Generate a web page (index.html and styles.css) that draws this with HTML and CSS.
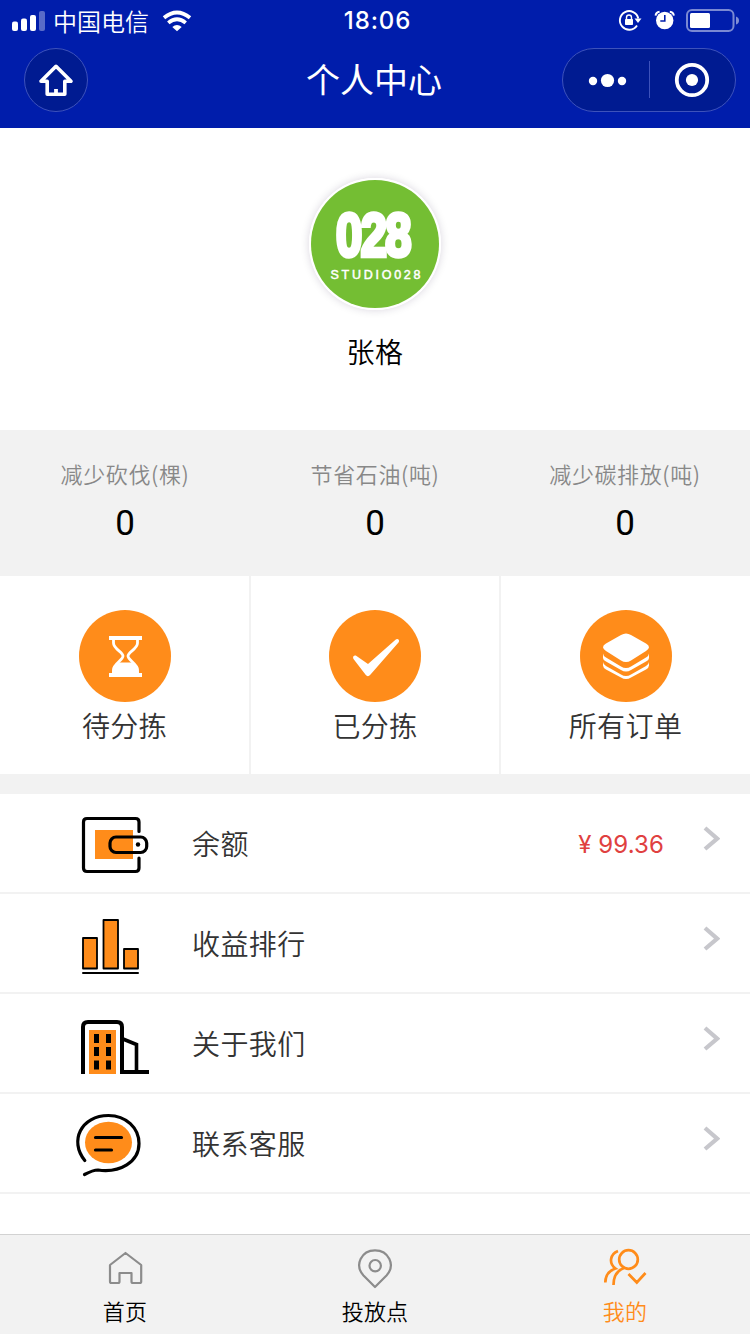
FILE: index.html
```html
<!DOCTYPE html>
<html lang="zh-CN">
<head>
<meta charset="utf-8">
<title>个人中心</title>
<link rel="stylesheet" href="styles.css">
</head>
<body>
<div class="app">
  <header class="header">
    <div class="status">
      <div class="status-left">
        <svg class="signal" viewBox="12 0 33 40"><g fill="#fff"><rect x="12" y="20.500" width="6" height="9.500" rx="2"/><rect x="21" y="17.500" width="6" height="12.500" rx="2"/><rect x="30" y="14" width="6" height="16" rx="2"/><rect x="39" y="10" width="6" height="20" rx="2" opacity=".35"/></g></svg>
        <span class="carrier">中国电信</span>
        <svg class="wifi" viewBox="162 0 30 40"><g fill="none" stroke="#fff" stroke-width="3.800"><path d="M164 16.800Q177 6.200 190 16.800"/><path d="M168.300 21.900Q177 14.700 185.700 21.900"/></g><path d="M172.300 26Q177 22.200 181.700 26L177 30.300Z" fill="#fff"/></svg>
      </div>
      <div class="time">18:06</div>
      <svg class="status-right" viewBox="614 0 124 40">
        <path d="M637 25.500A9.300 9.300 0 1 1 638.300 18.500" fill="none" stroke="#fff" stroke-width="1.900"/>
        <path d="M634.500 18.500h7l-3.500 4.500z" fill="#fff"/>
        <rect x="625" y="19" width="8" height="6" rx=".8" fill="#fff"/><path d="M626.500 19.500v-2a2.500 2.500 0 0 1 5 0v2" fill="none" stroke="#fff" stroke-width="1.400"/>
        <circle cx="664.700" cy="20.500" r="8.700" fill="#fff"/><path d="M664.800 15v6h-4.500" fill="none" stroke="#001dab" stroke-width="1.600"/><path d="M655.600 15.600q.2-3.500 4-3.900M673.800 15.600q-.2-3.500-4-3.900" fill="none" stroke="#fff" stroke-width="2"/>
        <rect x="687" y="10" width="46.500" height="21" rx="5" fill="none" stroke="#fff" stroke-opacity=".48" stroke-width="2"/><rect x="690" y="13" width="20" height="15" rx="1.500" fill="#fff"/><path d="M736 16.500q3 1 3 4t-3 4z" fill="#fff" opacity=".5"/>
      </svg>
    </div>
    <div class="nav">
      <svg class="home" viewBox="24 48 64 64"><circle cx="56" cy="80" r="31.500" fill="#001b91" stroke="#3d52bb"/><path d="M47.200 81.200H41L56 66.300 71 81.200H64.800V94.300H47.200Z" fill="none" stroke="#fff" stroke-width="3.600" stroke-linejoin="round"/><path d="M56 89v5" stroke="#fff" stroke-width="3.800"/></svg>
      <h1 class="title">个人中心</h1>
      <svg class="capsule" viewBox="562 48 174 64"><rect x="562.500" y="48.500" width="173" height="63" rx="31.500" fill="#001b91" stroke="#3d52bb"/><path d="M649.500 61v37" stroke="#3d52bb"/><g fill="#fff"><circle cx="593" cy="81" r="4.200"/><circle cx="607.500" cy="80.500" r="6.600"/><circle cx="622" cy="81" r="4.200"/><circle cx="692" cy="80" r="6.100"/></g><circle cx="692" cy="80" r="15.200" fill="none" stroke="#fff" stroke-width="3.800"/></svg>
    </div>
  </header>

  <section class="profile">
    <div class="avatar">
      <svg viewBox="311 180 128 128"><circle cx="375" cy="244" r="64" fill="#74be33"/>
        <text class="logo-number" transform="translate(373 255.500) scale(.76 1)" text-anchor="middle">028</text>
        <text class="logo-name" x="330.500" y="278.800" textLength="90">STUDIO028</text></svg>
    </div>
    <div class="name">张格</div>
  </section>

  <section class="stats">
    <div class="stat"><span class="stat-label">减少砍伐(棵)</span><span class="stat-value">0</span></div>
    <div class="stat"><span class="stat-label">节省石油(吨)</span><span class="stat-value">0</span></div>
    <div class="stat"><span class="stat-label">减少碳排放(吨)</span><span class="stat-value">0</span></div>
  </section>

  <section class="orders">
    <div class="order">
      <svg class="order-icon" viewBox="78 610 92 92"><circle cx="124" cy="656" r="46" fill="#ff8c1a"/><g fill="#fff"><path d="M108 636h33v4h-33zM108 673h33v4h-33z"/><path d="M111 674c0-6 3-8 7.500-11.500h12.500C135 666 138 668 138 674z"/></g><path d="M112.500 639v4c0 6 9.500 9 9.500 13s-9.500 8-9.500 13.500V674M136.500 639v4c0 6-9.500 9-9.500 13s9.500 8 9.500 13.500V674" fill="none" stroke="#fff" stroke-width="2.800"/></svg>
      <span>待分拣</span>
    </div>
    <div class="order">
      <svg class="order-icon" viewBox="329 610 92 92"><circle cx="375" cy="656" r="46" fill="#ff8c1a"/><path d="M353.500 659c-1.400-2.200.8-4.500 3-3l11.500 8 27.500-24.300c2-1.700 4.600.2 3.200 2.600L370.300 674.800c-1.500 1.800-3.300 1.700-4.500.2z" fill="#fff"/></svg>
      <span>已分拣</span>
    </div>
    <div class="order">
      <svg class="order-icon" viewBox="580 610 92 92"><circle cx="626" cy="656" r="46" fill="#ff8c1a"/><g fill="#fff"><path d="M621 635q5-3 10 0l15 8.500q6 3.700 0 7.500l-15 9.500q-5 3-10 0L606 651q-6-3.800 0-7.500z"/><path d="M603 653.500q0 2 3 4l15 9q5 3 10 0l15-9q3-2 3-4v4.500q0 2-3 3.500l-15 8.500q-5 3-10 0l-15-8.500q-3-1.500-3-3.500z"/><path d="M603 662q0 2 3 4l15 8.500q5 3 10 0l15-8.500q3-2 3-4v3.500q0 2-3 4l-15 8q-5 3-10 0l-15-8q-3-2-3-4z"/></g></svg>
      <span>所有订单</span>
    </div>
  </section>

  <main class="menu">
    <div class="row">
      <svg class="row-icon" viewBox="70 794 90 98"><rect x="95" y="830" width="38" height="29" fill="#ff8c1a"/><g fill="none" stroke="#000" stroke-width="3.200" stroke-linecap="round"><path d="M139 831.500V822q0-3.500-3.500-3.500H87q-3.500 0-3.500 3.500v46q0 3.500 3.500 3.500h48.500q3.500 0 3.500-3.500V858"/><rect x="110" y="837" width="36.700" height="15.500" rx="6"/></g><circle cx="138" cy="844.500" r="2.200"/></svg>
      <span class="row-label">余额</span><span class="amount">¥ 99.36</span>
      <svg class="arrow" viewBox="700 794 20 98"><path d="M705 828l12.200 10.700L705 849" fill="none" stroke="#c7c7cc" stroke-width="4.200"/></svg>
    </div>
    <div class="row">
      <svg class="row-icon" viewBox="70 894 90 98"><g fill="#ff8c1a" stroke="#000" stroke-width="1.800" stroke-linejoin="round"><rect x="83" y="938" width="14" height="30.500"/><rect x="103.500" y="920" width="14.500" height="48.500"/><rect x="124" y="949" width="14" height="19.500"/></g><path d="M83 973h55" stroke="#000" stroke-width="2" stroke-linecap="round"/></svg>
      <span class="row-label">收益排行</span>
      <svg class="arrow" viewBox="700 894 20 98"><path d="M705 928l12.200 10.700L705 949" fill="none" stroke="#c7c7cc" stroke-width="4.200"/></svg>
    </div>
    <div class="row">
      <svg class="row-icon" viewBox="70 994 90 98"><path d="M89 1030h27v44H89z" fill="#ff8c1a"/><path d="M94 1034h5v9h-5zM106 1034h5v9h-5zM94 1047h5v9h-5zM106 1047h5v9h-5zM94 1060.500h5v9h-5zM106 1060.500h5v9h-5z"/><g fill="none" stroke="#000" stroke-width="4"><path d="M83 1074V1027q0-5 5-5h29q5 0 5 5v45h27"/><path d="M123 1039l13.500 5.500V1072" stroke-width="3.600"/></g></svg>
      <span class="row-label">关于我们</span>
      <svg class="arrow" viewBox="700 994 20 98"><path d="M705 1028l12.200 10.700L705 1049" fill="none" stroke="#c7c7cc" stroke-width="4.200"/></svg>
    </div>
    <div class="row">
      <svg class="row-icon" viewBox="70 1094 90 98"><ellipse cx="108.500" cy="1142.500" rx="23.500" ry="20.800" fill="#ff8c1a"/><g fill="none" stroke="#000" stroke-width="3.200" stroke-linecap="round"><path d="M84.800 1160.500C69 1141 81 1115.500 108.500 1115.500C126 1115.500 139 1128 139 1143.500C139 1162 120 1173 98 1170Q93 1170 84.500 1174.500"/><path d="M95.500 1137.500h26M95.500 1150h16"/></g></svg>
      <span class="row-label">联系客服</span>
      <svg class="arrow" viewBox="700 1094 20 98"><path d="M705 1128l12.200 10.700L705 1149" fill="none" stroke="#c7c7cc" stroke-width="4.200"/></svg>
    </div>
  </main>

  <nav class="tabbar">
    <div class="tab">
      <svg class="tab-icon" viewBox="100 1240 50 56"><path d="M125.500 1253L141.200 1265V1281.500Q141.200 1283 139.700 1283H133Q131.500 1283 131.500 1281.500V1273H119.500V1281.500Q119.500 1283 118 1283H111.500Q110 1283 110 1281.500V1265Z" fill="none" stroke="#8c8c8c" stroke-width="2.200" stroke-linejoin="round"/></svg>
      <span>首页</span>
    </div>
    <div class="tab">
      <svg class="tab-icon" viewBox="350 1240 50 56"><path d="M375 1287L363.500 1275.500C354 1265 361.500 1250.300 375 1250.300S396 1265 386.500 1275.500Z" fill="none" stroke="#8c8c8c" stroke-width="2.200" stroke-linejoin="round"/><circle cx="375.200" cy="1265.700" r="5.700" fill="none" stroke="#8c8c8c" stroke-width="2.200"/></svg>
      <span>投放点</span>
    </div>
    <div class="tab active">
      <svg class="tab-icon" viewBox="600 1240 50 56"><g fill="none" stroke="#ff8c1a" stroke-width="2.700"><circle cx="628.500" cy="1259.500" r="9.300"/><path d="M618 1251C610 1254 608.500 1263.500 615.500 1268.500C609 1270.500 605.500 1275 605.300 1282.500M624 1268C617 1270.500 613.500 1277 613.500 1285M628.500 1274L636.800 1282.500 645.500 1273"/></g></svg>
      <span>我的</span>
    </div>
  </nav>
</div>
</body>
</html>
```

FILE: styles.css
```css
* { box-sizing: border-box; }
body { margin: 0; font-family: "Noto Sans CJK SC", sans-serif; font-weight: 350; color: #000; background: #fff; }
svg { display: block; flex: none; }
.app { width: 750px; height: 1334px; display: flex; flex-direction: column; }

.header { height: 128px; background: #001dab; color: #fff; flex: none; }
.status { height: 40px; padding: 0 12px; display: grid; grid-template-columns: 1fr auto 1fr; }
.status-left { display: flex; align-items: center; }
.signal { width: 33px; height: 40px; }
.carrier { margin-left: 8px; font-size: 24px; line-height: 40px; padding-bottom: 1px; }
.wifi { width: 30px; height: 40px; margin-left: 13px; }
.time { font: 500 24px/42px Inter, sans-serif; letter-spacing: .9px; padding-left: 5px; }
.status-right { width: 124px; height: 40px; justify-self: end; overflow: visible; }
.nav { height: 88px; padding: 8px 14px 0 24px; display: grid; grid-template-columns: 174px 1fr 174px; }
.home { width: 64px; height: 64px; }
.title { margin: 0; text-align: center; font-size: 34px; line-height: 62px; font-weight: 400; padding-right: 12px; }
.capsule { width: 174px; height: 64px; }

.profile { height: 302px; padding-top: 50px; display: flex; flex-direction: column; align-items: center; flex: none; }
.avatar { width: 132px; height: 132px; border: 2px solid #fff; border-radius: 50%; box-shadow: 0 0 8px rgba(30, 10, 60, .17); }
.avatar svg { width: 128px; height: 128px; }
.logo-number { font: 700 62px "Liberation Sans", sans-serif; fill: #fff; stroke: #fff; stroke-width: 4.500px; letter-spacing: -2px; }
.logo-name { font: 400 12.5px "Liberation Sans", sans-serif; fill: #fff; stroke: #fff; stroke-width: .5px; }
.name { margin-top: 21px; font-size: 28px; line-height: 40px; letter-spacing: .6px; }

.stats { height: 146px; background: #f2f2f2; display: grid; grid-template-columns: repeat(3, 1fr); flex: none; }
.stat { display: flex; flex-direction: column; align-items: center; padding-top: 27px; }
.stat-label { font-size: 22px; line-height: 32px; letter-spacing: .6px; color: #888; }
.stat-value { font: 400 35px/40px Roboto, sans-serif; margin-top: 15px; }

.orders { height: 218px; border-bottom: 20px solid #f2f2f2; display: grid; grid-template-columns: 249px 250px 251px; flex: none; }
.order { display: flex; flex-direction: column; align-items: center; padding-top: 34px; font-size: 28px; line-height: 40px; letter-spacing: .4px; color: #333; }
.order + .order { border-left: 2px solid #f2f2f2; }
.order-icon { width: 92px; height: 92px; }
.order span { margin-top: 3px; }

.menu { flex: 1; }
.row { height: 100px; border-bottom: 2px solid #f2f2f2; padding: 0 30px 0 70px; display: flex; align-items: center; }
.row-icon { width: 90px; height: 98px; }
.row-label { margin-left: 32px; flex: 1; font-size: 28px; line-height: 40px; letter-spacing: .4px; color: #333; padding-bottom: 1px; }
.amount { font: 400 24px/40px Inter, sans-serif; letter-spacing: .1px; color: #e04040; margin-right: 36px; padding-top: 3px; }
.arrow { width: 20px; height: 98px; }

.tabbar { height: 100px; flex: none; background: #f2f2f2; border-top: 1px solid #d2d2d2; display: grid; grid-template-columns: repeat(3, 1fr); }
.tab { display: flex; flex-direction: column; align-items: center; padding-top: 5px; font-size: 22px; line-height: 28px; letter-spacing: .2px; }
.tab-icon { width: 50px; height: 56px; }
.tab.active { color: #ff8c1a; }
```
